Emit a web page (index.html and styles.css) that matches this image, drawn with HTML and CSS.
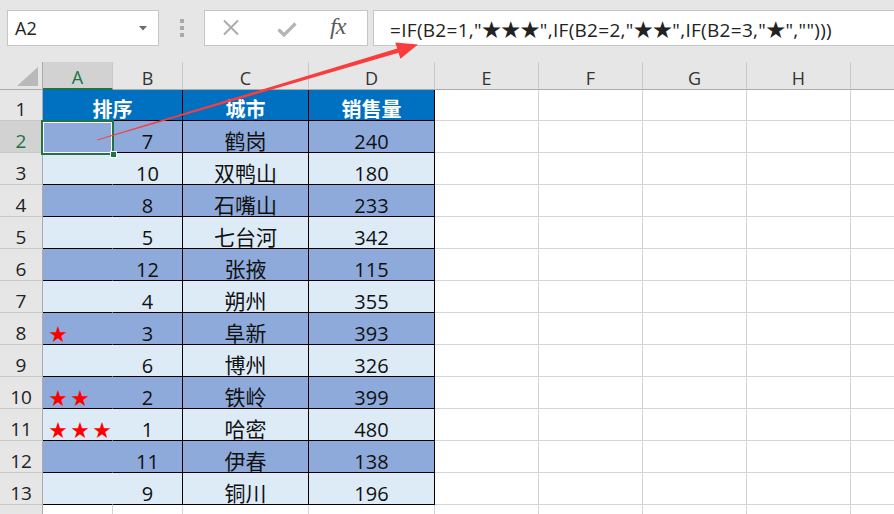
FILE: index.html
```html
<!DOCTYPE html>
<html lang="zh-CN">
<head>
<meta charset="utf-8">
<title>Excel</title>
<link rel="stylesheet" href="styles.css">
</head>
<body>
<div class="app">
  <div class="fbar">
    <div class="namebox">
      <span class="name">A2</span>
      <svg class="caret" width="8" height="5" viewBox="0 0 8 5"><path d="M0 0H8L4 4.5Z" fill="#6b6b6b"/></svg>
    </div>
    <div class="grip">
      <i></i><i></i><i></i>
    </div>
    <div class="btns">
      <svg class="ic-x" width="18" height="17" viewBox="0 0 18 17"><path d="M2 1.5L16 15.5M16 1.5L2 15.5" stroke="#ababab" stroke-width="2" fill="none"/></svg>
      <svg class="ic-ok" width="20" height="15" viewBox="0 0 20 15"><path d="M1.5 7.5L7 13L18.5 1.5" stroke="#b5b5b5" stroke-width="3.2" fill="none"/></svg>
      <span class="fx">fx</span>
    </div>
    <div class="formula">=IF(B2=1,"★★★",IF(B2=2,"★★",IF(B2=3,"★","")))</div>
  </div>

  <div class="sheet">
    <div class="ch corner"><svg width="26" height="22" viewBox="0 0 26 22"><path d="M24 2V21H3Z" fill="#b9b9b9"/></svg></div>
    <div class="ch sel-col">A</div>
    <div class="ch">B</div>
    <div class="ch">C</div>
    <div class="ch">D</div>
    <div class="ch">E</div>
    <div class="ch">F</div>
    <div class="ch">G</div>
    <div class="ch">H</div>
    <div class="ch last"></div>

    <div class="rh r1">1</div>
    <div class="c hd span2 r1">排序</div>
    <div class="c hd r1">城市</div>
    <div class="c hd r1">销售量</div>
    <div class="g r1"></div><div class="g r1"></div><div class="g r1"></div><div class="g r1"></div><div class="g r1 last"></div>

    <div class="rh sel-row">2</div>
    <div class="c a dk"></div><div class="c dk">7</div><div class="c zh dk">鹤岗</div><div class="c dk">240</div>
    <div class="g"></div><div class="g"></div><div class="g"></div><div class="g"></div><div class="g last"></div>

    <div class="rh">3</div>
    <div class="c a lt"></div><div class="c lt">10</div><div class="c zh lt">双鸭山</div><div class="c lt">180</div>
    <div class="g"></div><div class="g"></div><div class="g"></div><div class="g"></div><div class="g last"></div>

    <div class="rh">4</div>
    <div class="c a dk"></div><div class="c dk">8</div><div class="c zh dk">石嘴山</div><div class="c dk">233</div>
    <div class="g"></div><div class="g"></div><div class="g"></div><div class="g"></div><div class="g last"></div>

    <div class="rh">5</div>
    <div class="c a lt"></div><div class="c lt">5</div><div class="c zh lt">七台河</div><div class="c lt">342</div>
    <div class="g"></div><div class="g"></div><div class="g"></div><div class="g"></div><div class="g last"></div>

    <div class="rh">6</div>
    <div class="c a dk"></div><div class="c dk">12</div><div class="c zh dk">张掖</div><div class="c dk">115</div>
    <div class="g"></div><div class="g"></div><div class="g"></div><div class="g"></div><div class="g last"></div>

    <div class="rh">7</div>
    <div class="c a lt"></div><div class="c lt">4</div><div class="c zh lt">朔州</div><div class="c lt">355</div>
    <div class="g"></div><div class="g"></div><div class="g"></div><div class="g"></div><div class="g last"></div>

    <div class="rh">8</div>
    <div class="c a dk"><span class="stars">★</span></div><div class="c dk">3</div><div class="c zh dk">阜新</div><div class="c dk">393</div>
    <div class="g"></div><div class="g"></div><div class="g"></div><div class="g"></div><div class="g last"></div>

    <div class="rh">9</div>
    <div class="c a lt"></div><div class="c lt">6</div><div class="c zh lt">博州</div><div class="c lt">326</div>
    <div class="g"></div><div class="g"></div><div class="g"></div><div class="g"></div><div class="g last"></div>

    <div class="rh">10</div>
    <div class="c a dk"><span class="stars">★★</span></div><div class="c dk">2</div><div class="c zh dk">铁岭</div><div class="c dk">399</div>
    <div class="g"></div><div class="g"></div><div class="g"></div><div class="g"></div><div class="g last"></div>

    <div class="rh">11</div>
    <div class="c a lt"><span class="stars">★★★</span></div><div class="c lt">1</div><div class="c zh lt">哈密</div><div class="c lt">480</div>
    <div class="g"></div><div class="g"></div><div class="g"></div><div class="g"></div><div class="g last"></div>

    <div class="rh">12</div>
    <div class="c a dk"></div><div class="c dk">11</div><div class="c zh dk">伊春</div><div class="c dk">138</div>
    <div class="g"></div><div class="g"></div><div class="g"></div><div class="g"></div><div class="g last"></div>

    <div class="rh">13</div>
    <div class="c a lt"></div><div class="c lt">9</div><div class="c zh lt">铜川</div><div class="c lt">196</div>
    <div class="g"></div><div class="g"></div><div class="g"></div><div class="g"></div><div class="g last"></div>

    <div class="rh"></div>
    <div class="g"></div><div class="g"></div><div class="g"></div><div class="g"></div>
    <div class="g"></div><div class="g"></div><div class="g"></div><div class="g"></div><div class="g last"></div>

    <div class="selection"><span class="handle"></span></div>
  </div>

  <svg class="arrow" width="894" height="514" viewBox="0 0 894 514">
    <polygon points="97.2,139.4 397.2,48.6 395.3,42.6 418,44.6 400.4,58.8 398.5,52.8 96.8,140.6" fill="#fa3c3c"/>
  </svg>
</div>
</body>
</html>
```

FILE: styles.css
```css
* { box-sizing: border-box; }
html, body { margin: 0; padding: 0; }
body {
  width: 894px;
  height: 514px;
  overflow: hidden;
  background: #ffffff;
  font-family: "Open Sans", "Noto Sans CJK SC", sans-serif;
  color: #000;
}
.app {
  position: relative;
  width: 894px;
  height: 514px;
  overflow: hidden;
}

/* formula bar */
.fbar {
  height: 62px;
  background: #e6e6e6;
  display: flex;
  align-items: flex-start;
  padding-top: 10px;
}
.namebox {
  margin-left: 7px;
  width: 152px;
  height: 36px;
  background: #fff;
  border: 1px solid #c6c6c6;
  display: flex;
  align-items: center;
  justify-content: space-between;
  padding: 0 11px 0 7px;
}
.name {
  font-size: 18px;
  color: #222;
}
.caret { margin-top: 1px; }
.grip {
  width: 45px;
  height: 36px;
  display: flex;
  flex-direction: column;
  align-items: center;
  justify-content: center;
  gap: 3px;
}
.grip i {
  display: block;
  width: 4px;
  height: 4px;
  background: #a9a9a9;
}
.btns {
  width: 164px;
  height: 36px;
  background: #fff;
  border: 1px solid #c6c6c6;
  display: flex;
  align-items: center;
  padding-left: 17px;
}
.ic-x { margin-top: -1px; }
.ic-ok { margin-left: 37px; margin-top: 2px; }
.fx {
  margin-left: 33px;
  font-family: "Liberation Serif", "DejaVu Serif", serif;
  font-style: italic;
  font-size: 24px;
  color: #5a5a5a;
  letter-spacing: -1px;
  margin-top: -3px;
}
.formula {
  margin-left: 5px;
  flex: 1;
  height: 36px;
  background: #fff;
  border: 1px solid #c6c6c6;
  border-right: none;
  padding-left: 16px;
  padding-top: 2px;
  display: flex;
  align-items: center;
  font-size: 19px;
  letter-spacing: 0.3px;
  color: #222;
  white-space: nowrap;
}

/* sheet grid */
.sheet {
  position: relative;
  display: grid;
  grid-template-columns: 43px 70px 70px 126px 126px 104px 104px 104px 104px 1fr;
  grid-template-rows: 28px 31px repeat(13, 32px);
}
.ch {
  background: #e6e6e6;
  border-right: 1px solid #c9c9c9;
  border-bottom: 1px solid #ababab;
  display: flex;
  align-items: center;
  justify-content: center;
  font-size: 18px;
  color: #333;
  padding-top: 4px;
}
.ch.corner {
  align-items: flex-end;
  justify-content: flex-end;
  padding: 0 2px 2px 0;
  border-right-color: #ababab;
}
.ch.sel-col {
  background: #d2d2d2;
  color: #217346;
  border-bottom: 2px solid #217346;
}
.ch.last { border-right: none; }

.rh {
  background: #e6e6e6;
  border-right: 1px solid #ababab;
  border-bottom: 1px solid #c9c9c9;
  display: flex;
  align-items: center;
  justify-content: center;
  font-size: 19px;
  color: #222;
  padding-top: 8px;
}
.rh.sel-row {
  background: #d2d2d2;
  color: #217346;
}

.g {
  border-right: 1px solid #d4d4d4;
  border-bottom: 1px solid #d4d4d4;
}
.g.last { border-right: none; }

.c {
  display: flex;
  align-items: center;
  justify-content: center;
  font-size: 20px;
  border-right: 1px solid #000;
  border-bottom: 1px solid #000;
  color: #111;
  padding-top: 9px;
}
.c.zh { font-size: 21px; padding-top: 7px; }
.c.span2 { grid-column: span 2; }
.c.hd {
  background: #0070c0;
  color: #fff;
  font-weight: 700;
  font-size: 20px;
  padding-top: 7px;
}
.c.dk { background: #8eaadb; }
.c.lt { background: #ddebf7; }
.c.a.dk { border-right-color: #8eaadb; }
.c.a.lt { border-right-color: #ddebf7; }
.c.a {
  justify-content: flex-start;
  padding-left: 6px;
}
.stars {
  font-family: "Noto Sans CJK SC", sans-serif;
  color: #ff0000;
  font-size: 18px;
  letter-spacing: 4px;
}

.selection {
  position: absolute;
  left: 41px;
  top: 58px;
  width: 73px;
  height: 35px;
  border: 2px solid #217346;
  box-shadow: inset 0 0 0 1px #ffffff;
}
.handle {
  position: absolute;
  right: -5px;
  bottom: -5px;
  width: 7px;
  height: 7px;
  background: #217346;
  border: 1px solid #ffffff;
}

.arrow {
  position: absolute;
  left: 0;
  top: 0;
  pointer-events: none;
}
```
